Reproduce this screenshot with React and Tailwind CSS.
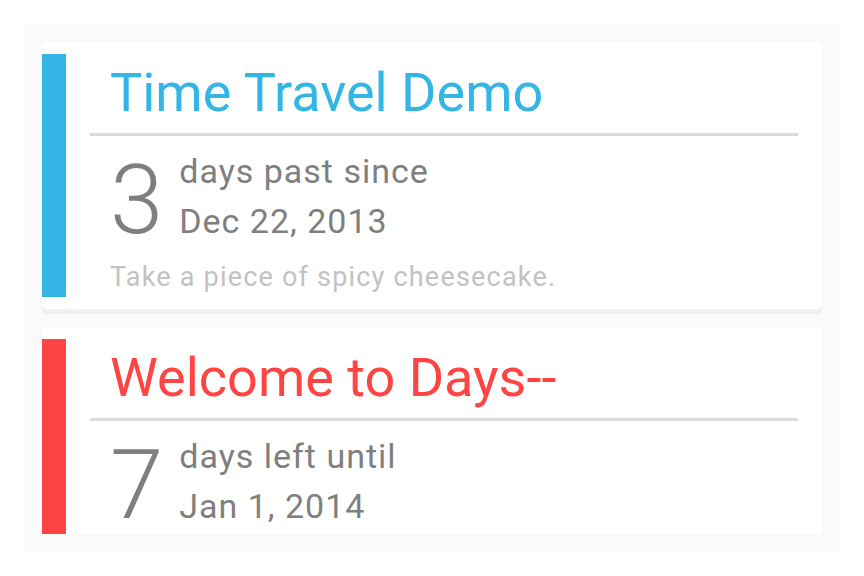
const cards = [
  {
    title: 'Time Travel Demo',
    color: 'blue',
    count: 3,
    label: 'days past since',
    date: 'Dec 22, 2013',
    note: 'Take a piece of spicy cheesecake.',
  },
  {
    title: 'Welcome to Days--',
    color: 'red',
    count: 7,
    label: 'days left until',
    date: 'Jan 1, 2014',
    note: '',
  },
]

function DayCard({ card }) {
  const bar = card.color === 'blue' ? 'bg-[#33b5e5]' : 'bg-[#ff4444]'
  const text = card.color === 'blue' ? 'text-[#33b5e5]' : 'text-[#ff4444]'

  return (
    <div className="flex shrink-0 rounded-[5px] bg-white py-3 shadow-[0_5px_0_#f0f0f0]">
      <div className={`w-6 shrink-0 ${bar}`} />
      <div className="flex-1 px-6">
        <h2 className={`pl-5 pt-[7px] pb-[8px] text-[54px] leading-[64px] font-normal ${text}`}>{card.title}</h2>
        <div className="h-[3px] bg-[#dcdcdc]" />
        <div className="flex items-start gap-4 pl-5">
          <span className="mt-4 text-[96px] leading-none font-[350] text-[#7f7f7f]">{card.count}</span>
          <div className="mt-[10px] text-[34px] leading-[50px] tracking-[1px] text-[#7f7f7f]">
            <p>{card.label}</p>
            <p>{card.date}</p>
          </div>
        </div>
        <p className="mt-[17px] mb-[8px] pl-5 text-[27px] leading-6 tracking-[1.2px] text-[#c2c2c2]">{card.note || '\u00a0'}</p>
      </div>
    </div>
  )
}

export default function App() {
  return (
    <div className="min-h-screen bg-white p-6 font-['Roboto',sans-serif]">
      <div className="rounded-md bg-[#fafafa] p-[18px]">
        <div className="flex h-[492px] flex-col gap-[18px] overflow-hidden">
          {cards.map((card) => (
            <DayCard key={card.title} card={card} />
          ))}
        </div>
      </div>
    </div>
  )
}
